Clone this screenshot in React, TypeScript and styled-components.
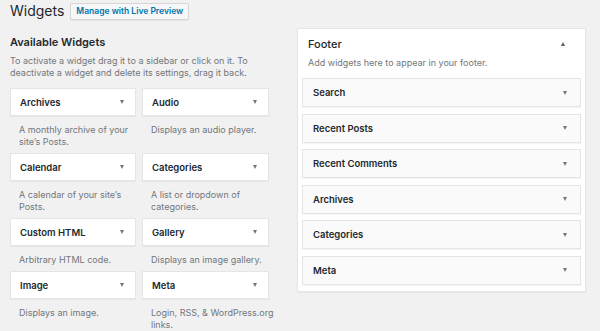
import React from 'react';
import styled, { createGlobalStyle } from 'styled-components';

const GlobalStyle = createGlobalStyle`
  html, body {
    margin: 0;
    padding: 0;
    background: #f1f1f1;
    overflow: hidden;
  }
  body {
    font-family: Inter, "Noto Sans", "Liberation Sans", sans-serif;
    color: #23282d;
  }
`;

const Page = styled.div`
  width: 600px;
  height: 331px;
  padding-left: 10px;
  box-sizing: border-box;
  overflow: hidden;
`;

const Header = styled.header`
  display: flex;
  align-items: center;
  height: 22px;
`;

const Title = styled.h1`
  margin: 0;
  font-size: 14px;
  font-weight: 400;
  line-height: 22px;
  color: #23282d;
`;

const PreviewButton = styled.button`
  margin-left: 6px;
  height: 17px;
  padding: 0 5px;
  border: 1px solid #d5d5d5;
  border-radius: 2px;
  background: #f7f7f7;
  color: #0073aa;
  font-family: inherit;
  font-size: 8.5px;
  font-weight: 600;
  line-height: 15px;
  box-shadow: 0 1px 0 #e5e5e5;
`;

const ScreenLink = styled.a`
  align-self: flex-start;
  margin-left: auto;
  margin-right: -40px;
  margin-top: -10px;
  font-size: 9px;
  line-height: 10px;
  color: #0073aa;
  white-space: nowrap;
  text-decoration: underline dotted;
`;

const Columns = styled.div`
  display: flex;
  align-items: flex-start;
`;

const Available = styled.section`
  width: 259px;
  flex-shrink: 0;
`;

const SectionTitle = styled.h2`
  margin: 13px 0 0;
  font-size: 11px;
  font-weight: 600;
  line-height: 14px;
`;

const Intro = styled.p`
  margin: 5.5px 0 8.5px;
  font-size: 9px;
  line-height: 12.5px;
  color: #72777c;
  white-space: nowrap;
`;

const WidgetGrid = styled.div`
  display: grid;
  grid-template-columns: 126px 127px;
  column-gap: 6px;
`;

const Caret = styled.span<{ $up?: boolean }>`
  width: 0;
  height: 0;
  border-left: 2.5px solid transparent;
  border-right: 2.5px solid transparent;
  ${({ $up }) =>
    $up ? 'border-bottom: 4px solid #555d66;' : 'border-top: 4px solid #72777c;'}
`;

const Card = styled.div`
  display: flex;
  align-items: center;
  justify-content: space-between;
  height: 28px;
  box-sizing: border-box;
  padding: 0 11px 0 9px;
  background: #fff;
  border: 1px solid #e5e5e5;
  box-shadow: 0 1px 1px rgba(0, 0, 0, 0.04);
  font-size: 9.5px;
  font-weight: 600;
`;

const CardDesc = styled.p`
  margin: 8px 0 5px;
  padding-left: 9px;
  font-size: 9px;
  line-height: 12px;
  color: #72777c;
  white-space: nowrap;
`;

const Sidebar = styled.section`
  margin: 6px 0 0 28px;
  width: 289px;
  box-sizing: border-box;
  padding: 0 4px 6px;
  background: #fff;
  border: 1px solid #e5e5e5;
  box-shadow: 0 1px 1px rgba(0, 0, 0, 0.04);
`;

const SidebarHead = styled.div`
  display: flex;
  align-items: center;
  justify-content: space-between;
  padding: 8px 16px 0 6px;
  font-size: 11px;
  font-weight: 500;
  line-height: 14px;
`;

const SidebarDesc = styled.p`
  margin: 6px 0 9px 6px;
  font-size: 9px;
  line-height: 12px;
  color: #72777c;
`;

const SidebarList = styled.div`
  display: flex;
  flex-direction: column;
  gap: 6.6px;
`;

const SidebarItem = styled.div`
  display: flex;
  align-items: center;
  justify-content: space-between;
  height: 29px;
  box-sizing: border-box;
  padding: 0 13px 0 10px;
  background: #fafafa;
  border: 1px solid #e5e5e5;
  box-shadow: 0 1px 1px rgba(0, 0, 0, 0.04);
  font-size: 9.5px;
  font-weight: 600;
`;

const widgets: { name: string; desc: React.ReactNode }[] = [
  { name: 'Archives', desc: <>A monthly archive of your<br />site’s Posts.</> },
  { name: 'Audio', desc: 'Displays an audio player.' },
  { name: 'Calendar', desc: <>A calendar of your site’s<br />Posts.</> },
  { name: 'Categories', desc: <>A list or dropdown of<br />categories.</> },
  { name: 'Custom HTML', desc: 'Arbitrary HTML code.' },
  { name: 'Gallery', desc: 'Displays an image gallery.' },
  { name: 'Image', desc: 'Displays an image.' },
  { name: 'Meta', desc: <>Login, RSS, &amp; WordPress.org<br />links.</> },
];

const footerWidgets = ['Search', 'Recent Posts', 'Recent Comments', 'Archives', 'Categories', 'Meta'];

const App = () => {
  return (
    <Page>
      <GlobalStyle />
      <Header>
        <Title>Widgets</Title>
        <PreviewButton>Manage with Live Preview</PreviewButton>
        <ScreenLink>Screen Options</ScreenLink>
      </Header>
      <Columns>
        <Available>
          <SectionTitle>Available Widgets</SectionTitle>
          <Intro>
            To activate a widget drag it to a sidebar or click on it. To
            <br />
            deactivate a widget and delete its settings, drag it back.
          </Intro>
          <WidgetGrid>
            {widgets.map((w) => (
              <div key={w.name}>
                <Card>
                  {w.name}
                  <Caret />
                </Card>
                <CardDesc>{w.desc}</CardDesc>
              </div>
            ))}
          </WidgetGrid>
        </Available>
        <Sidebar>
          <SidebarHead>
            Footer
            <Caret $up />
          </SidebarHead>
          <SidebarDesc>Add widgets here to appear in your footer.</SidebarDesc>
          <SidebarList>
            {footerWidgets.map((name) => (
              <SidebarItem key={name}>
                {name}
                <Caret />
              </SidebarItem>
            ))}
          </SidebarList>
        </Sidebar>
      </Columns>
    </Page>
  );
};

export default App;
